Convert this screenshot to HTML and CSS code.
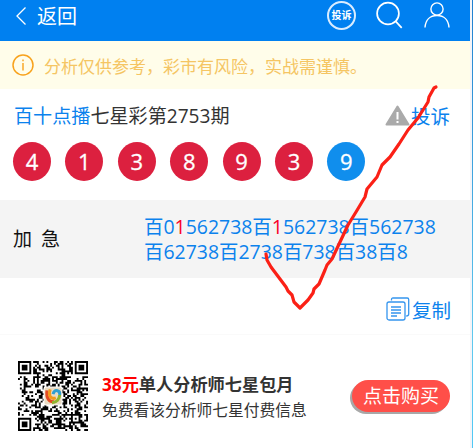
FILE: index.html
```html
<!DOCTYPE html>
<html lang="zh-CN">
<head>
<meta charset="utf-8">
<title>七星彩</title>
<link rel="stylesheet" href="styles.css">
</head>
<body>
<div class="frame">
<div class="page">
<header class="top">
  <svg class="chev" width="12" height="20" viewBox="0 0 12 20"><path d="M10.5 1.5 2 10l8.5 8.5" fill="none" stroke="#fff" stroke-width="1.3"/></svg>
  <span class="back">返回</span>
  <nav class="tools">
    <span class="seal">投诉</span>
    <svg class="search" width="27" height="28" viewBox="0 0 27 28"><g fill="none" stroke="#fff" stroke-width="1.7"><circle cx="12" cy="12.5" r="10.9"/><path d="m19.7 20.4 6 6.4"/></g></svg>
    <svg class="user" width="26" height="26" viewBox="0 0 26 26"><g fill="none" stroke="#fff" stroke-width="1.4"><circle cx="13" cy="7" r="6.1"/><path d="M1 25.5C1.5 18 6 13.5 13 13.5S24.500 18 25 25.500"/></g></svg>
  </nav>
</header>
<div class="notice">
  <svg width="22" height="22" viewBox="0 0 22 22"><circle cx="11" cy="11" r="10" fill="none" stroke="#f8a21c" stroke-width="1.5"/><path d="M11 9v7.500M11 5.500v1.800" stroke="#f8a21c" stroke-width="1.400"/></svg>
  <span>分析仅供参考，彩市有风险，实战需谨慎。</span>
</div>
<section class="issue">
  <h1><span class="blue">百十点播</span>七星彩第2753期</h1>
  <div class="complain"><svg width="25" height="21" viewBox="0 0 25 21"><path d="M12.500 1.500 23.500 19.500h-22z" fill="#aaa" stroke="#aaa" stroke-width="2" stroke-linejoin="round"/><path d="M12.500 7v7.500M12.500 16v2" stroke="#fff" stroke-width="2"/></svg><span>投诉</span></div>
</section>
<div class="balls"><b>4</b><b>1</b><b>3</b><b>8</b><b>9</b><b>3</b><b class="last">9</b></div>
<section class="picks">
  <div class="label">加 急</div>
  <div class="nums">百0<i>1</i>562738百<i>1</i>562738百562738<br>百62738百2738百738百38百8</div>
</section>
<div class="copy"><svg width="24" height="24" viewBox="0 0 24 24"><g fill="none" stroke="#3595ee" stroke-width="1.300"><path d="M5.500 3.500V2.500q0-1.500 1.500-1.500h14.200q1.500 0 1.500 1.500V17q0 2-2.500 2"/><rect x="1" y="5" width="18" height="18" rx="2"/><path d="M5 10h10M5 13h10M5 16h10M5 19h6"/></g></svg><span>复制</span></div>
<section class="buy">
  <svg class="qr" id="qr" viewBox="0 0 37 37"></svg>
  <div class="offer"><div class="title"><em>38元</em>单人分析师七星包月</div><div class="sub">免费看该分析师七星付费信息</div></div>
  <div class="btn">点击购买</div>
</section>
</div>
</div>
<svg class="check" width="473" height="448" viewBox="0 0 473 448"><path d="M266 254L267 260 271 267 280 279 286 287 288 291 292 295 294 302 300 308 308 300 313 293 314 289 319 284 325 270 327 265 332 259 340 242 348 225 356 212 365 197 367 189 377 177 382 165 390 157 399 144 408 130 418 118 428 102 429 97 434 88 436 87" fill="none" stroke="#fb2016" stroke-width="3.200" stroke-linejoin="round" stroke-linecap="round"/></svg>
<script src="qr.js"></script>
</body>
</html>
```
FILE: styles.css
```css
body { margin: 0; background: #fff; font-family: "Open Sans", "Noto Sans CJK SC", sans-serif; color: #333; overflow: hidden; }
svg { display: block; flex: none; }
.frame { box-sizing: border-box; width: 473px; height: 448px; padding-right: 3px; background: linear-gradient(#2080d0, #60c8ee 75%, #50c8f5) right / 1px 100% no-repeat, #f4f4f8; }
.page { height: 448px; background: #fff; white-space: nowrap; font-weight: 400; }
.top { display: flex; height: 41px; background: #0080f0; color: #fff; }
.chev { margin: 6px 0 0 15px; }
.back { margin-left: 10px; font-size: 20px; line-height: 33px; }
.tools { display: flex; margin-left: auto; }
.seal { box-sizing: border-box; width: 29px; height: 29px; margin-top: 1px; border: 2px solid #d9ecff; border-radius: 50%; font-size: 10px; font-weight: 700; line-height: 25px; text-align: center; }
.search { margin: 1px 0 0 20px; }
.user { margin: 2px 20px 0 21px; }
.notice { display: flex; align-items: center; height: 48px; background: #fffdea; color: #f5c563; font-size: 17px; }
.notice svg { margin-left: 12px; }
.notice span { margin-left: 10px; }
.issue { display: flex; justify-content: space-between; height: 53px; }
h1 { margin: 0 0 0 14px; font-size: 19.100px; font-weight: 400; line-height: 54px; }
.blue, .complain, .copy { color: #0b82ed; }
.complain { display: flex; align-items: center; margin-right: 20px; font-size: 19.500px; }
.complain span { margin-left: 1px; }
.balls { display: flex; gap: 14.400px; height: 58px; padding-left: 13px; }
.balls b { width: 38px; height: 39px; border-radius: 50%; background: #dc203f; color: #fff; font-size: 22px; font-weight: 400; line-height: 38px; text-align: center; -webkit-text-stroke: .3px #fff; }
.balls .last { background: #108eed; }
.picks { display: flex; height: 78px; background: #f4f4f4; }
.label { width: 131px; padding-left: 13px; color: #111; font-size: 19px; line-height: 78px; word-spacing: 4px; }
.nums { padding-top: 14px; color: #0b82ed; font-size: 19.450px; line-height: 25px; }
.nums i { color: #fa0028; font-style: normal; }
.copy { box-sizing: border-box; display: flex; align-items: center; justify-content: flex-end; height: 57px; padding: 6px 19px 0 0; border-bottom: 1px solid #fafafa; font-size: 19.500px; }
.copy span { margin-left: 2px; }
.buy { display: flex; padding: 26px 0 0 18px; }
.qr { width: 70px; height: 70px; }
.offer { margin: 11px 0 0 14px; }
.title { font-size: 17.200px; font-weight: 700; line-height: 25px; }
.title em { color: #f00; font-style: normal; }
.sub { font-size: 15.750px; line-height: 27px; }
.btn { width: 98px; height: 32px; margin: 19px 20px 0 auto; border-radius: 16px; background: #ff4f49; box-shadow: -2px 2px 0 #a8a8a8; color: #fff; font-size: 19px; line-height: 32px; text-align: center; }
.check { position: absolute; left: 0; top: 0; }
```
FILE: qr.js
```js
const size = 37;
let seed = 2753;
function bit() {
  seed = (seed * 1103515245 + 12345) % 2147483648;
  return (seed >> 16) & 1;
}
function finder(x, y, fx, fy) {
  const d = Math.max(Math.abs(x - fx), Math.abs(y - fy));
  return d > 4 ? null : d === 3 || d < 2;
}
let path = "";
for (let y = 0; y < size; y++) {
  for (let x = 0; x < size; x++) {
    let on = bit();
    for (const [fx, fy] of [[3, 3], [33, 3], [3, 33]]) {
      const f = finder(x, y, fx, fy);
      if (f !== null) on = f;
    }
    const a = Math.max(Math.abs(x - 30), Math.abs(y - 30));
    if (a < 3) on = a !== 1;
    if (on) path += `M${x} ${y}h1v1h-1z`;
  }
}
document.getElementById("qr").innerHTML = `<path d="${path}"/>
<rect x="13.500" y="13.500" width="10" height="10" rx="1" fill="#fff"/><rect x="14" y="14" width="9" height="9" rx=".8" fill="#eadcc4"/>
<g fill="none" stroke-width="1.600"><path d="M15.300 15.500c-.5 4 1 6.500 4 6" stroke="#e54a22"/><path d="M17 15c-1 3 0 5.500 3 4.500" stroke="#f39a1c"/><path d="M18.500 17.500c1-3 4-2 3.500.5" stroke="#2f9fd0"/><path d="M22 18c0 2-1.500 4-4 4" stroke="#8fb52f"/></g>`;
```
